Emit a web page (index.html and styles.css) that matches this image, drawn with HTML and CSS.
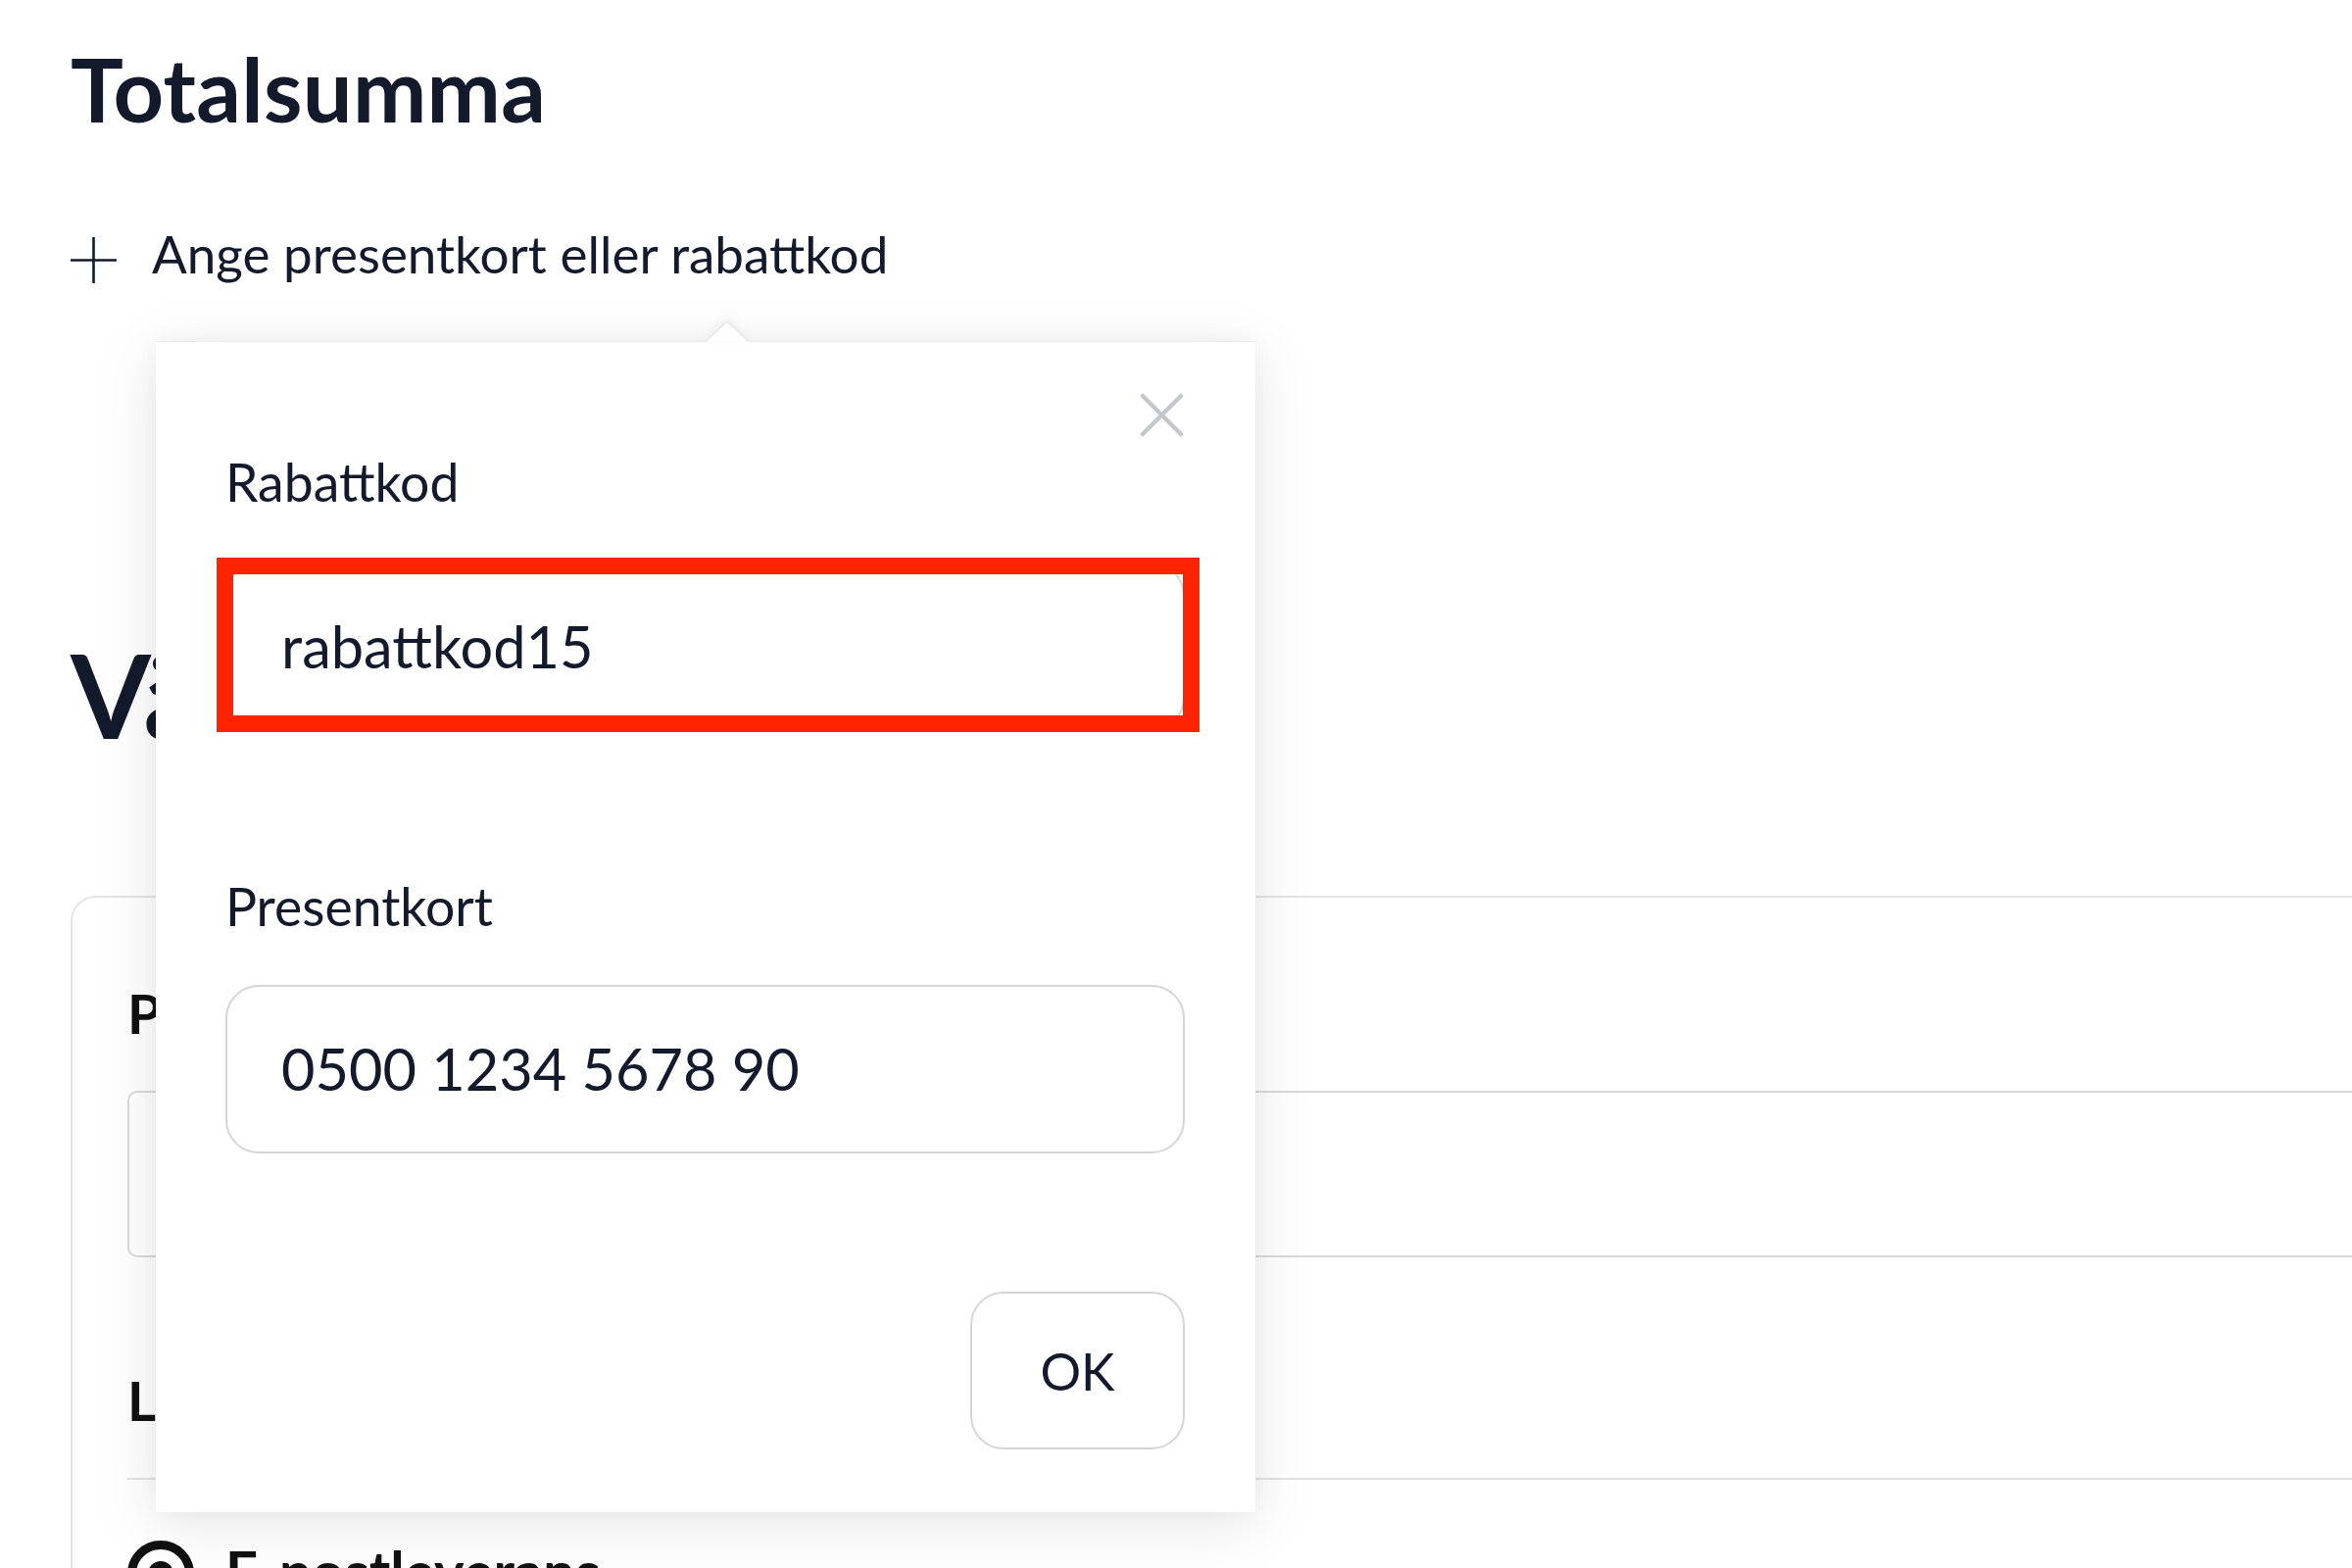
FILE: index.html
```html
<!DOCTYPE html>
<html lang="sv">
<head>
<meta charset="utf-8">
<title>Totalsumma</title>
<link rel="stylesheet" href="styles.css">
</head>
<body>
<div class="page">
  <h1 class="title">Totalsumma</h1>
  <div class="discount-toggle">
    <svg class="plus-icon" width="47" height="47" viewBox="0 0 47 47" aria-hidden="true">
      <line x1="23.5" y1="0" x2="23.5" y2="47" />
      <line x1="0" y1="23.5" x2="47" y2="23.5" />
    </svg>
    <span class="toggle-text">Ange presentkort eller rabattkod</span>
  </div>

  <h2 class="section-title">Välj</h2>
  <div class="card">
    <div class="card-label">Personnummer</div>
    <div class="card-input"></div>
    <div class="card-label card-label-second">Leveranssätt</div>
    <div class="divider"></div>
    <div class="radio-row">
      <span class="radio"></span>
      <span class="radio-text">E-postleverans</span>
    </div>
  </div>

  <div class="popover">
    <svg class="popover-arrow" width="44" height="22" viewBox="0 0 44 22" aria-hidden="true">
      <polygon points="0,22 22,0 44,22" />
      <polyline points="0,21.5 22,0.8 44,21.5" />
    </svg>
    <svg class="close-icon" width="45" height="45" viewBox="0 0 45 45" aria-hidden="true">
      <line x1="3" y1="3" x2="42" y2="42" />
      <line x1="42" y1="3" x2="3" y2="42" />
    </svg>
    <div class="field-label">Rabattkod</div>
    <div class="field field-first">
      <div class="input">rabattkod15</div>
      <div class="highlight"></div>
    </div>
    <div class="field-label field-label-second">Presentkort</div>
    <div class="field field-second">
      <div class="input">0500 1234 5678 90</div>
    </div>
    <div class="actions">
      <div class="ok-button">OK</div>
    </div>
  </div>
</div>
</body>
</html>
```

FILE: styles.css
```css
html, body {
  margin: 0;
  padding: 0;
  background: #ffffff;
}

body {
  font-family: "Lato", "Inter", "Liberation Sans", sans-serif;
  color: #131a2b;
}

.page {
  position: relative;
  width: 2400px;
  height: 1600px;
  overflow: hidden;
  box-sizing: border-box;
  padding: 45px 0 0 72px;
}

.title {
  margin: 0;
  font-size: 90px;
  line-height: 1;
  font-weight: 700;
  letter-spacing: 0.3px;
}

.discount-toggle {
  display: flex;
  align-items: flex-start;
  gap: 36px;
  margin-top: 97px;
}

.plus-icon {
  display: block;
  margin-top: 10px;
  flex: none;
}

.plus-icon line {
  stroke: #131a2b;
  stroke-width: 2.6;
}

.toggle-text {
  font-size: 53px;
  line-height: 1;
}

.section-title {
  margin: 361px 0 0 0;
  font-size: 118px;
  line-height: 1;
  font-weight: 700;
}

.card {
  margin-top: 146px;
  margin-right: -300px;
  border: 2px solid #e4e4e4;
  border-radius: 26px;
  padding: 90px 0 0 56px;
  height: 900px;
}

.card-label {
  font-size: 56px;
  line-height: 1;
  font-weight: 700;
  color: #111111;
}

.card-input {
  margin-top: 51px;
  height: 166px;
  border: 2px solid #d9d9d9;
  border-radius: 10px;
}

.card-label-second {
  margin-top: 118px;
}

.divider {
  margin-top: 51px;
  height: 2px;
  background: #e2e2e2;
}

.radio-row {
  display: flex;
  align-items: flex-start;
  gap: 32px;
  margin-top: 62px;
}

.radio {
  width: 50px;
  height: 50px;
  border: 9px solid #111111;
  border-radius: 50%;
  position: relative;
  flex: none;
}

.radio::after {
  content: "";
  position: absolute;
  left: 12px;
  top: 12px;
  width: 26px;
  height: 26px;
  border-radius: 50%;
  background: #111111;
}

.radio-text {
  font-size: 58px;
  line-height: 1;
  font-weight: 700;
  color: #111111;
  margin-top: 2px;
}

.popover {
  position: absolute;
  top: 348px;
  left: 159px;
  width: 1122px;
  box-sizing: border-box;
  padding: 116px 72px 64px 71px;
  background: #ffffff;
  border-top: 1px solid #ececec;
  box-shadow: 0 12px 60px rgba(0, 0, 0, 0.10), 0 0 20px rgba(0, 0, 0, 0.04);
}

.popover-arrow {
  position: absolute;
  top: -22px;
  left: 561px;
  filter: drop-shadow(0 -3px 5px rgba(0, 0, 0, 0.05));
}

.popover-arrow polygon {
  fill: #ffffff;
}

.popover-arrow polyline {
  fill: none;
  stroke: #e6e6e6;
  stroke-width: 1.5;
}

.close-icon {
  position: absolute;
  top: 52px;
  right: 73px;
}

.close-icon line {
  stroke: #c3c7ca;
  stroke-width: 4.5;
  stroke-linecap: round;
}

.field-label {
  font-size: 53.5px;
  line-height: 1;
}

.field-label-second {
  margin-top: 152px;
}

.field {
  position: relative;
}

.field-first {
  margin-top: 55px;
}

.field-second {
  margin-top: 54px;
}

.input {
  box-sizing: border-box;
  height: 172px;
  border: 2px solid #d5d5d5;
  border-radius: 34px;
  padding-left: 55px;
  display: flex;
  align-items: center;
  font-size: 59.5px;
  line-height: 1;
  background: #ffffff;
}

.highlight {
  position: absolute;
  left: -9px;
  right: -15px;
  top: -5px;
  bottom: -1px;
  border: 17px solid #ff2400;
}

.actions {
  display: flex;
  justify-content: flex-end;
  margin-top: 141px;
}

.ok-button {
  box-sizing: border-box;
  width: 219px;
  height: 161px;
  border: 2px solid #d5d5d5;
  border-radius: 34px;
  display: flex;
  align-items: center;
  justify-content: center;
  font-size: 52px;
  line-height: 1;
  background: #ffffff;
}
```
